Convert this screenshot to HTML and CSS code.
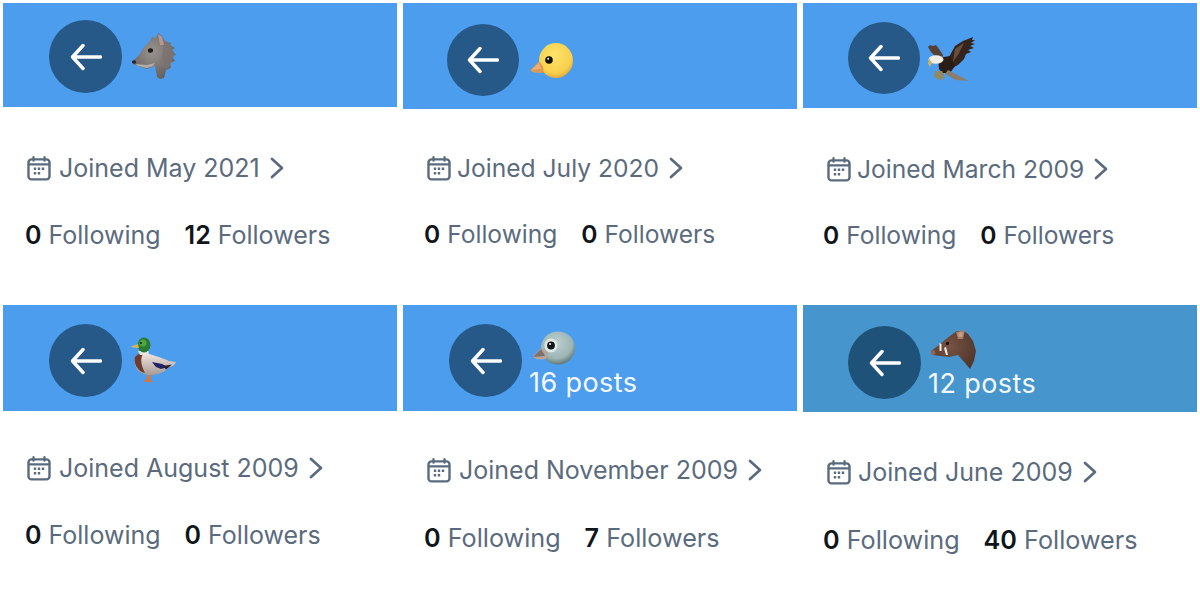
FILE: index.html
```html
<!DOCTYPE html>
<html lang="en">
<head>
<meta charset="utf-8">
<title>Profiles</title>
<link rel="stylesheet" href="styles.css">
</head>
<body>
<svg class="defs" width="0" height="0" aria-hidden="true">
  <defs>
    <symbol id="arrow" viewBox="0 0 32 28"><path d="M30.500 14H3.500M13 2.500 2.500 14 13 25.500" fill="none" stroke="#fff" stroke-width="3.400" stroke-linecap="round" stroke-linejoin="round"/></symbol>
    <symbol id="cal" viewBox="0 0 24 25"><rect x="1.500" y="3.400" width="21" height="20" rx="3" fill="none" stroke="currentColor" stroke-width="2.400"/><path d="M2 8.400h20M6.500 1.200v3.500M17.500 1.200v3.500" fill="none" stroke="currentColor" stroke-width="2.300" stroke-linecap="round"/><path d="M6.800 11.500h2.400v2.400H6.800zM10.800 11.500h2.400v2.400h-2.400zM14.800 11.500h2.400v2.400h-2.400zM6.800 16h2.400v2.400H6.800zM10.800 16h2.400v2.400h-2.400z" fill="currentColor"/></symbol>
    <symbol id="chev" viewBox="0 0 14 22"><path d="M2 2l10 9-10 9" fill="none" stroke="currentColor" stroke-width="2.700" stroke-linecap="round" stroke-linejoin="round"/></symbol>
    <radialGradient id="gWolf" cx=".45" cy=".4" r=".7"><stop offset="0" stop-color="#9a9490"/><stop offset="1" stop-color="#5d5856"/></radialGradient>
    <radialGradient id="gChick" cx=".45" cy=".35" r=".7"><stop offset="0" stop-color="#fde36c"/><stop offset=".72" stop-color="#f9d04c"/><stop offset="1" stop-color="#dd9f38"/></radialGradient>
    <radialGradient id="gPig" cx=".45" cy=".35" r=".72"><stop offset="0" stop-color="#bfd0d0"/><stop offset=".65" stop-color="#9cb5b5"/><stop offset="1" stop-color="#4f6160"/></radialGradient>
    <radialGradient id="gBoar" cx=".4" cy=".4" r=".75"><stop offset="0" stop-color="#775343"/><stop offset="1" stop-color="#4d332a"/></radialGradient>
    <linearGradient id="gDuck" x1="0" y1="0" x2="0" y2="1"><stop offset="0" stop-color="#f1e6e0"/><stop offset="1" stop-color="#a89994"/></linearGradient>
  </defs>
</svg>
<main class="grid">

  <article class="card card-1">
    <header class="head">
      <span class="back"><svg class="arrow"><use href="#arrow"/></svg></span>
      <div class="title">
        <svg class="emoji wolf" viewBox="6 4 46 48" role="img" aria-label="wolf">
          <path d="M8 33 14 27 19 19 25 13 27 9 31 10 33 5 37 8 40 13 46 15 45 17 50 20 47 22 51 27 47 28 50 33 45 35 46 40 41 42 39 50 35 51 32 49 30 38 22 41 13 38 8 36Z" fill="url(#gWolf)"/>
          <path d="M33 6 37 9 39 17 35 17Z" fill="#b5978f"/>
          <path d="M39 15 46 17 49 27 46 36 41 42 37 30Z" fill="#7d7370" opacity=".8"/>
          <ellipse cx="25.500" cy="22.500" rx="2.600" ry="2.300" fill="#1e1c1c"/>
          <ellipse cx="9" cy="34" rx="2" ry="1.700" fill="#222"/>
          <path d="M10 36 22 37 30 35 28 38 22 40 13 38Z" fill="#b1aca8"/>
        </svg>
      </div>
    </header>
    <section class="meta">
      <p class="joined"><svg class="cal"><use href="#cal"/></svg><span>Joined May 2021</span><svg class="chev"><use href="#chev"/></svg></p>
      <p class="stats"><span><b>0</b> Following</span><span><b>12</b> Followers</span></p>
    </section>
  </article>

  <article class="card card-2">
    <header class="head">
      <span class="back"><svg class="arrow"><use href="#arrow"/></svg></span>
      <div class="title">
        <svg class="emoji chick" viewBox="530 42 44 38" role="img" aria-label="baby chick">
          <ellipse cx="556" cy="60.500" rx="17" ry="17.500" fill="url(#gChick)"/>
          <path d="M539 61.500 530.500 70C531 72.500 538 73.500 543.500 72.500 544 68 542 64 539 61.500Z" fill="#dc9a58"/>
          <path d="M539 63 531.500 70 541 68.500Z" fill="#eeb070"/>
          <circle cx="549" cy="60" r="3.800" fill="#15110c"/>
          <circle cx="548.200" cy="58.700" r="1" fill="#fff"/>
        </svg>
      </div>
    </header>
    <section class="meta">
      <p class="joined"><svg class="cal"><use href="#cal"/></svg><span>Joined July 2020</span><svg class="chev"><use href="#chev"/></svg></p>
      <p class="stats"><span><b>0</b> Following</span><span><b>0</b> Followers</span></p>
    </section>
  </article>

  <article class="card card-3">
    <header class="head">
      <span class="back"><svg class="arrow"><use href="#arrow"/></svg></span>
      <div class="title">
        <svg class="emoji eagle" viewBox="5 6 48 47" role="img" aria-label="eagle">
          <path d="M27 27 33 16 41 11 51 7 50 10 53 10 49 13 53 14 48 16 52 18 46 20 49 22 44 24 42 29 36 35 30 38Z" fill="#35241b"/>
          <path d="M33 19 42 13 36 25 31 32Z" fill="#6a4d3a"/>
          <path d="M6 17 8 15 11 16 14 15 17 19 21 25 20 29 14 27 9 22Z" fill="#574135"/>
          <path d="M16 28 28 26 33 36 28 43 20 43 17 39Z" fill="#2a1d17"/>
          <path d="M26 40 47 51 34 50 23 44Z" fill="#8a7d6c"/>
          <ellipse cx="14" cy="29.500" rx="7.500" ry="4.200" fill="#f0ede6"/>
          <path d="M7 28 10 33 8 37 6 34Z" fill="#cfb45e"/>
          <path d="M13 41 20 41 23 47 19 50 15 49 12 46Z" fill="#8d8a66"/>
        </svg>
      </div>
    </header>
    <section class="meta">
      <p class="joined"><svg class="cal"><use href="#cal"/></svg><span>Joined March 2009</span><svg class="chev"><use href="#chev"/></svg></p>
      <p class="stats"><span><b>0</b> Following</span><span><b>0</b> Followers</span></p>
    </section>
  </article>

  <article class="card card-4">
    <header class="head">
      <span class="back"><svg class="arrow"><use href="#arrow"/></svg></span>
      <div class="title">
        <svg class="emoji duck" viewBox="5 5 48 47" role="img" aria-label="duck">
          <path d="M22.500 41 22 47 18 49.500 28 50.500 25.500 47.500 26 41Z" fill="#d9763c"/>
          <path d="M10 26C13 21 19 20 24 22 31 24 38 26 44 29L51 30C50 33 47 35 44 35 41 39 35 42 28 43 20 44 13 40 11 35 9.500 32 9.500 29 10 26Z" fill="url(#gDuck)"/>
          <path d="M10 25C12 22 15 21 18 22 15 27 16 33 20 41 13 40 8 31 10 25Z" fill="#6e3c2e"/>
          <path d="M27 30 37 32 43 35 36 37 31 35Z" fill="#1f2368"/>
          <path d="M38 34 47 32.500 41 37.500Z" fill="#27211f"/>
          <path d="M13 19 15 23H24L23 17Z" fill="#e9e5dc"/>
          <ellipse cx="19" cy="13" rx="6.500" ry="7.500" fill="#2b7a32"/>
          <ellipse cx="18" cy="11" rx="3.500" ry="3.500" fill="#4da544"/>
          <path d="M6 14.500 13 12 14 16 8 15.500Z" fill="#dcb54a"/>
          <circle cx="16" cy="11" r=".9" fill="#111"/>
        </svg>
      </div>
    </header>
    <section class="meta">
      <p class="joined"><svg class="cal"><use href="#cal"/></svg><span>Joined August 2009</span><svg class="chev"><use href="#chev"/></svg></p>
      <p class="stats"><span><b>0</b> Following</span><span><b>0</b> Followers</span></p>
    </section>
  </article>

  <article class="card card-5">
    <header class="head">
      <span class="back"><svg class="arrow"><use href="#arrow"/></svg></span>
      <div class="title">
        <svg class="emoji pigeon" viewBox="7 8 45 36" role="img" aria-label="pigeon">
          <ellipse cx="33" cy="26" rx="17" ry="16.500" fill="url(#gPig)"/>
          <path d="M16 26 8 34C8 37 14 38 21 37L23 31Z" fill="#b3a49b"/>
          <path d="M16 27 8 35 20 34Z" fill="#7f706a"/>
          <ellipse cx="26" cy="23.500" rx="6.500" ry="7" fill="#dfe8e6"/>
          <circle cx="26" cy="23.500" r="3.900" fill="#14161a"/>
          <circle cx="25" cy="22" r="1" fill="#fff"/>
        </svg>
        <span class="posts">16 posts</span>
      </div>
    </header>
    <section class="meta">
      <p class="joined"><svg class="cal"><use href="#cal"/></svg><span>Joined November 2009</span><svg class="chev"><use href="#chev"/></svg></p>
      <p class="stats"><span><b>0</b> Following</span><span><b>7</b> Followers</span></p>
    </section>
  </article>

  <article class="card card-6">
    <header class="head">
      <span class="back"><svg class="arrow"><use href="#arrow"/></svg></span>
      <div class="title">
        <svg class="emoji boar" viewBox="6 7 46 41" role="img" aria-label="boar">
          <path d="M6 29 14 23 21 17 29 11 32 9 39 9 43 12 48 19 51 29 49 39 45 47 40 41 33 33 24 35 15 34 8 33Z" fill="url(#gBoar)"/>
          <path d="M31 10 40 8 38 17 33 17Z" fill="#a67f68"/>
          <path d="M33 11 38 10 37 15 34 15Z" fill="#c39f86"/>
          <circle cx="22.500" cy="21.500" r="1.700" fill="#1c130f"/>
          <path d="M14.500 21 16.500 22 16.500 29 14.500 29Z" fill="#f4eee4"/>
          <path d="M19 26 21 25 23 33 21 33Z" fill="#f4eee4"/>
          <ellipse cx="8" cy="30.500" rx="2.500" ry="2.500" fill="#8f6553"/>
        </svg>
        <span class="posts">12 posts</span>
      </div>
    </header>
    <section class="meta">
      <p class="joined"><svg class="cal"><use href="#cal"/></svg><span>Joined June 2009</span><svg class="chev"><use href="#chev"/></svg></p>
      <p class="stats"><span><b>0</b> Following</span><span><b>40</b> Followers</span></p>
    </section>
  </article>

</main>
</body>
</html>
```

FILE: styles.css
```css
* { box-sizing: border-box; }
html, body { margin: 0; height: 100%; overflow: hidden; background: #fff; }
body { font-family: Inter, "Liberation Sans", sans-serif; }
.defs { position: absolute; }

.grid {
  display: grid;
  grid-template-columns: repeat(3, 394px);
  grid-template-rows: 302px 296px;
  column-gap: 6px;
  padding: 3px 3px 0;
}

.card {
  --head-h: 104px;
  --head-top: 17px;
  --head-left: 46px;
  --head-bg: #4d9dee;
  --back-bg: #265888;
  --back-size: 73px;
  --join-top: 46px;
  --stats-top: 37px;
  --stats-left: 22px;
  --cal-gap: 8px;
  --fs: 25px;
  --stats-fs: 25px;
  min-width: 0;
}

.head {
  display: flex;
  align-items: flex-start;
  height: var(--head-h);
  padding: var(--head-top) 0 0 var(--head-left);
  background: var(--head-bg);
}
.back {
  display: flex;
  flex: none;
  align-items: center;
  justify-content: center;
  width: var(--back-size);
  height: var(--back-size);
  border-radius: 50%;
  background: var(--back-bg);
}
.arrow { width: 32px; height: 28px; }

.title { display: flex; flex-direction: column; align-items: flex-start; }
.emoji { display: block; flex: none; filter: blur(.4px); }
.posts {
  margin-left: 7px;
  font-size: 27px;
  line-height: 30px;
  color: #f4f9fe;
  white-space: nowrap;
  letter-spacing: .4px;
}

.wolf   { width: 46px; height: 48px; margin: 12px 0 0 9px; }
.chick  { width: 44px; height: 38px; margin: 18px 0 0 11px; }
.eagle  { width: 48px; height: 47px; margin: 14px 0 0 7px; }
.duck   { width: 48px; height: 47px; margin: 13px 0 0 8px; }
.pigeon { width: 45px; height: 36px; margin: 6px 0 2px 10px; }
.boar   { width: 46px; height: 41px; margin: 3px 0 -1px 10px; }

.card-2 { --head-h: 106px; --head-top: 21px; --head-left: 44px; --back-size: 72px; --join-top: 44px; --stats-top: 36px; --stats-left: 21px; --cal-gap: 6px; --fs: 24.6px; --stats-fs: 24.6px; }
.card-3 { --head-h: 105px; --head-top: 19px; --head-left: 45px; --back-size: 72px; --join-top: 46px; --stats-top: 36px; --stats-left: 20px; --cal-gap: 6px; --fs: 24.6px; --stats-fs: 24.6px; }
.card-4 { --head-h: 106px; --head-top: 19px; --join-top: 42px; --stats-top: 37px; }
.card-5 { --head-h: 106px; --head-top: 19px; --join-top: 44px; --stats-top: 38px; --stats-left: 21px; --stats-fs: 25.2px; }
.card-6 { --head-h: 107px; --head-top: 21px; --head-left: 45px; --head-bg: #4695cd; --back-bg: #1f5279; --join-top: 45px; --stats-top: 38px; --stats-left: 20px; --cal-gap: 7px; --stats-fs: 25.2px; }

.meta { color: #5b6b7e; }
.joined, .stats {
  display: flex;
  align-items: center;
  height: 30px;
  margin: 0;
  white-space: nowrap;
}
.joined { margin-top: var(--join-top); padding-left: 24px; font-size: var(--fs); }
.stats {
  margin-top: var(--stats-top);
  padding-left: var(--stats-left);
  column-gap: 24px;
  font-size: var(--stats-fs);
}
.stats b { font-weight: 600; color: #10151b; }
.cal { width: 24px; height: 25px; margin-right: var(--cal-gap); }
.chev { width: 14px; height: 22px; margin-left: 10px; }
```
